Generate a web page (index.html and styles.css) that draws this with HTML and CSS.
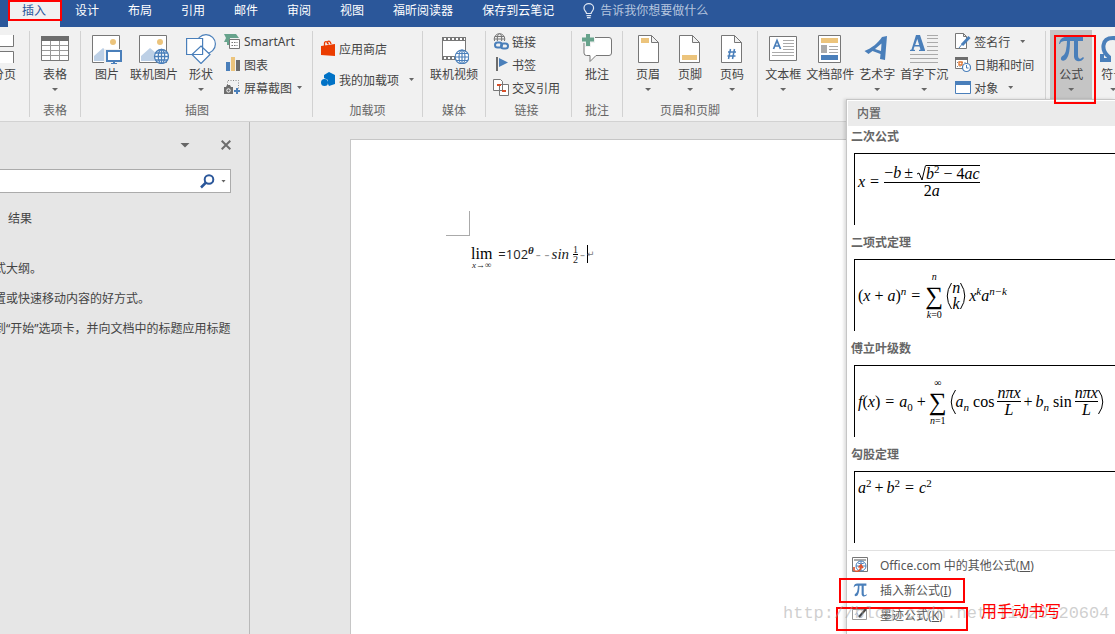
FILE: index.html
```html
<!DOCTYPE html>
<html lang="zh-CN">
<head>
<meta charset="utf-8">
<title>Word</title>
<link rel="stylesheet" href="styles.css">
</head>
<body>
<div class="app">
  <nav class="tabs">
    <button class="tab active">插入</button>
    <button class="tab">设计</button>
    <button class="tab">布局</button>
    <button class="tab">引用</button>
    <button class="tab">邮件</button>
    <button class="tab">审阅</button>
    <button class="tab">视图</button>
    <button class="tab">福昕阅读器</button>
    <button class="tab">保存到云笔记</button>
    <button class="tab tell">
      <svg width="12" height="16" viewBox="0 0 12 16" fill="none" stroke="#dfe7f3" stroke-width="1.2"><path d="M3.5 10.5C3.500 8.500 1 8 1 5a4.800 4.300 0 0 1 9.600 0c0 3-2.500 3.500-2.500 5.500zM3.500 12.700h4.600M4 14.700h3.600"/></svg>
      告诉我你想要做什么
    </button>
  </nav>

  <div class="ribbon">
    <section class="group pages">
      <div class="tools">
        <button class="big">
          <svg width="30" height="30" viewBox="0 0 30 30" fill="#fff" stroke="#777"><path d="M5.500 1v11.500h19V1M5.500 29V17.500h19V29"/></svg>
          <span>分页</span>
        </button>
      </div>
    </section>

    <section class="group table">
      <div class="tools">
        <button class="big">
          <svg width="30" height="30" viewBox="0 0 30 30"><path fill="#fff" stroke="#777" d="M1.500 2.500h27v24h-27z"/><path fill="#6d6d6d" d="M1 2h28v5H1z"/><path stroke="#999" fill="none" d="M2 11.500h26M2 16.500h26M2 21.500h26M10.500 7v19M19.500 7v19"/></svg>
          <span>表格</span><i class="caret"></i>
        </button>
      </div>
      <h2>表格</h2>
    </section>

    <section class="group art">
      <div class="tools">
        <button class="big">
          <svg width="30" height="30" viewBox="0 0 30 30"><path fill="#fff" stroke="#777" d="M.5 1.500h27v27H.5z"/><circle cx="21" cy="8" r="3" fill="#ecc47c"/><path fill="#bdd0e6" d="M2 27v-5l9-8 5 4v9z"/><path fill="#fff" stroke="#f1f1f1" stroke-width="4" d="M14 17h15v10H14z"/><path fill="#fff" stroke="#4a7fba" stroke-width="2" d="M15 17h14v10H15z"/><path fill="#4a7fba" d="M21 27h2v2h2v1h-6v-1h2z"/></svg>
          <span>图片</span>
        </button>
        <button class="big">
          <svg width="30" height="30" viewBox="0 0 30 30"><path fill="#fff" stroke="#777" d="M.5 1.500h27v27H.5z"/><circle cx="21" cy="8" r="3" fill="#ecc47c"/><path fill="#bdd0e6" d="M2 27v-5l9-8 6 5v8z"/><g fill="#fff" stroke="#4a7fba" stroke-width="1.300"><circle cx="22.500" cy="22.500" r="7"/><ellipse cx="22.500" cy="22.500" rx="3.200" ry="7"/><path d="M15.500 22.500h14M16.500 19h12M16.500 26h12M22.500 15.500v14"/></g></svg>
          <span>联机图片</span>
        </button>
        <button class="big">
          <svg width="30" height="30" viewBox="0 0 30 30" fill="#fff" stroke="#4a7fba" stroke-width="1.200"><circle cx="20" cy="10" r="9.400"/><path d="M.6 4.500h16v16H.6zM15 12l9 8.500-9 9-9-9z"/></svg>
          <span>形状</span><i class="caret"></i>
        </button>
        <div class="stack">
          <button class="small">
            <svg width="17" height="17" viewBox="0 0 17 17"><path fill="#67a38c" d="M0 1h12l3 4H6v7H3V9H0l2-4z"/><path fill="#fff" stroke="#777" d="M5.500 6.500h10v9h-10z"/><path stroke="#777" stroke-dasharray="1.500 1" d="M7.500 9.500h6M7.500 12.500h6"/></svg>
            <span>SmartArt</span>
          </button>
          <button class="small">
            <svg width="17" height="17" viewBox="0 0 17 17"><path fill="#4a7fba" d="M2 6h4v9H2z"/><path fill="#ecc47c" d="M7 1h4v14H7z"/><path fill="#6d6d6d" d="M12 4h4v11h-4z"/></svg>
            <span>图表</span>
          </button>
          <button class="small">
            <svg width="17" height="17" viewBox="0 0 17 17"><path fill="none" stroke="#888" stroke-dasharray="1 1.500" d="M3.500 6V1.500h11V10"/><path fill="#6d6d6d" d="M0 8h2l1-2h3l1 2h2v7H0z"/><circle cx="4.500" cy="11.500" r="1.700" fill="#6d6d6d" stroke="#fff"/><path stroke="#4a7fba" stroke-width="2" d="M10 12h6M13 9v6"/></svg>
            <span>屏幕截图</span><i class="caret"></i>
          </button>
        </div>
      </div>
      <h2>插图</h2>
    </section>

    <section class="group addins">
      <div class="tools">
        <div class="stack wide">
          <button class="small">
            <svg width="15" height="17" viewBox="0 0 15 17"><path fill="#eb3c00" d="M0 6l14-2v12L0 15z"/><path fill="none" stroke="#eb3c00" stroke-width="1.300" d="M3.500 6V3c0-2 3-2 4 1.500M6.500 4V2c1-1.500 3-1 3.500 2"/></svg>
            <span>应用商店</span>
          </button>
          <button class="small">
            <svg width="15" height="17" viewBox="0 0 15 17"><path fill="#0072c6" d="M8 1l6 3v9l-6 2-1-2V9L3 7V4z"/><circle cx="3.500" cy="11.500" r="3.500" fill="#0072c6"/></svg>
            <span>我的加载项</span><i class="caret far"></i>
          </button>
        </div>
      </div>
      <h2>加载项</h2>
    </section>

    <section class="group media">
      <div class="tools">
        <button class="big">
          <svg width="30" height="30" viewBox="0 0 30 30"><path fill="#fff" stroke="#777" d="M3.500 3.500h23v22h-23z"/><path fill="#777" d="M3 3h24v4H3zM3 22h14v4H3z"/><path stroke="#fff" stroke-width="2" stroke-dasharray="2 2" d="M5 5h21M5 24h10"/><g fill="#fff" stroke="#4a7fba" stroke-width="1.200"><circle cx="23" cy="23" r="6.800"/><ellipse cx="23" cy="23" rx="3" ry="6.800"/><path d="M16 23h14M17 19.500h12M17 26.500h12M23 16v14"/></g></svg>
          <span>联机视频</span>
        </button>
      </div>
      <h2>媒体</h2>
    </section>

    <section class="group links">
      <div class="tools">
        <div class="stack">
          <button class="small">
            <svg width="16" height="17" viewBox="0 0 16 17" fill="none"><g stroke="#777"><circle cx="6.500" cy="6" r="5.300"/><ellipse cx="6.500" cy="6" rx="2.200" ry="5.300"/><path d="M1 6h11M2 3.500h9"/></g><path fill="#f1f1f1" d="M1 8h15v8H1z"/><g stroke="#4a7fba" stroke-width="2"><rect x="2" y="9.500" width="7" height="5" rx="2.500"/><rect x="8" y="10.500" width="7" height="5" rx="2.500"/></g></svg>
            <span>链接</span>
          </button>
          <button class="small">
            <svg width="16" height="17" viewBox="0 0 16 17"><path fill="#6d6d6d" d="M3 1h2v14H3z"/><path fill="#4a7fba" d="M6 2l9 4.500L6 11z"/></svg>
            <span>书签</span>
          </button>
          <button class="small">
            <svg width="16" height="17" viewBox="0 0 16 17" fill="#fff" stroke="#777"><path d="M6.500 5.500h9v11h-9zM.5.5h7l2 2v9h-9z"/><path stroke="#d8502a" stroke-width="2" d="M4 6h4M9 12h4"/></svg>
            <span>交叉引用</span>
          </button>
        </div>
      </div>
      <h2>链接</h2>
    </section>

    <section class="group comments">
      <div class="tools">
        <button class="big">
          <svg width="30" height="30" viewBox="0 0 30 30"><path fill="#fff" stroke="#777" d="M5 3.500h22q2.500 0 2.500 2.500v13q0 2.500-2.500 2.500H14l-6 6v-6H4.500q-2.500 0-2.500-2.500V6z"/><path stroke="#f1f1f1" stroke-width="6" d="M0 6h13M6 0v13"/><path stroke="#67a38c" stroke-width="4" d="M0 5.500h12M6-1v13"/></svg>
          <span>批注</span>
        </button>
      </div>
      <h2>批注</h2>
    </section>

    <section class="group headers">
      <div class="tools">
        <button class="big">
          <svg width="24" height="30" viewBox="0 0 24 30"><path fill="#fff" stroke="#777" d="M2.500 1.500h13l7 7v20h-20zM15.500 1.500v7h7"/><path fill="#ecc47c" d="M5 4h8v5H5z"/></svg>
          <span>页眉</span><i class="caret"></i>
        </button>
        <button class="big">
          <svg width="24" height="30" viewBox="0 0 24 30"><path fill="#fff" stroke="#777" d="M1.500 1.500h13l7 7v20h-20zM14.500 1.500v7h7"/><path fill="#ecc47c" d="M4 21h15v5H4z"/></svg>
          <span>页脚</span><i class="caret"></i>
        </button>
        <button class="big">
          <svg width="24" height="30" viewBox="0 0 24 30"><path fill="#fff" stroke="#777" d="M1.500 1.500h13l7 7v20h-20zM14.500 1.500v7h7"/><path fill="none" stroke="#4a7fba" stroke-width="1.500" d="M10.500 15l-2 10M14.500 15l-2 10M8 18h8M7.500 22h8"/></svg>
          <span>页码</span><i class="caret"></i>
        </button>
      </div>
      <h2>页眉和页脚</h2>
    </section>

    <section class="group text">
      <div class="tools">
        <button class="big">
          <svg width="30" height="30" viewBox="0 0 30 30"><path fill="#fff" stroke="#777" d="M1.500 2.500h27v24h-27z"/><path fill="none" stroke="#4a7fba" stroke-width="1.700" d="M5.500 15L9 6.500l3.500 8.500M6.500 12h5"/><path stroke="#aaa" d="M15 6.500h11M15 9.500h11M15 12.500h11M15 15.500h11M4 18.500h22M4 21.500h22"/></svg>
          <span>文本框</span><i class="caret"></i>
        </button>
        <button class="big">
          <svg width="30" height="30" viewBox="0 0 30 30"><path fill="#fff" stroke="#777" d="M3.500 1.500h22v27h-22z"/><path fill="#ecc47c" d="M6 4h17v5H6z"/><path fill="#aaa" d="M6 11h6v8H6z"/><path stroke="#aaa" d="M14 12.500h9M14 15.500h9M14 18.500h9"/><path fill="#4a7fba" d="M6 21h17v5H6z"/></svg>
          <span>文档部件</span><i class="caret"></i>
        </button>
        <button class="big">
          <svg width="30" height="30" viewBox="0 0 30 30" fill="#4a7fba"><path fill-rule="evenodd" d="M20 3l5-1-2 24-5-1 .5-5-8-3-4 3-4-3C10 14 16 9 20 3zm-.5 6.500L13 15l6 2z"/></svg>
          <span>艺术字</span><i class="caret"></i>
        </button>
        <button class="big">
          <svg width="30" height="30" viewBox="0 0 30 30"><path fill="#4a7fba" fill-rule="evenodd" d="M7 1h4l5 15v1h-6v-1l1.500-.5-1-3H5.500l-1 3L6 16v1H1v-1l1.500-.5zM8.300 5L6.200 11h4z"/><path stroke="#aaa" d="M18 1.500h11M18 4.500h11M18 8.500h11M18 12.500h11M18 16.500h11M1 20.500h28M1 24.500h28M1 28.500h28"/></svg>
          <span>首字下沉</span><i class="caret"></i>
        </button>
        <div class="stack">
          <button class="small">
            <svg width="16" height="17" viewBox="0 0 16 17"><path fill="#fff" stroke="#777" d="M.5.5h8l3 3v12H.5zM8.500.5v3h3"/><path stroke="#4a7fba" stroke-width="3" d="M14.500 4L7 12"/><path stroke="#4a7fba" d="M4 15l4-5"/></svg>
            <span>签名行</span><i class="caret far"></i>
          </button>
          <button class="small">
            <svg width="16" height="17" viewBox="0 0 16 17"><path fill="#fff" stroke="#777" d="M.5 1.500h12v11H.5z"/><path fill="#6d6d6d" d="M0 1h13v3H0z"/><path stroke="#888" stroke-dasharray="1 1.500" d="M2 6.500h9M2 10.500h9"/><path fill="#fff" stroke="#e0742f" stroke-width="1.300" d="M4 6h3v3H4z"/><circle cx="11.500" cy="11.500" r="4" fill="#fff" stroke="#4a7fba" stroke-width="1.200"/><path fill="none" stroke="#4a7fba" d="M11.500 9v3h2"/></svg>
            <span>日期和时间</span>
          </button>
          <button class="small">
            <svg width="16" height="17" viewBox="0 0 16 17"><path fill="#fff" stroke="#4a7fba" d="M.5 2.500h15v12H.5z"/><path fill="#4a7fba" d="M0 2h16v4H0z"/></svg>
            <span>对象</span><i class="caret far"></i>
          </button>
        </div>
      </div>
    </section>

    <section class="group symbols">
      <div class="tools">
        <button class="big pressed" aria-expanded="true">
          <svg width="30" height="30" viewBox="0 0 30 30" fill="#4a7fba"><path d="M3 10C4 5 6 3 10 3h17v4h-5v14c0 4 2 5 5 2l1 1c-2 4-9 5-10-1V7h-4c0 8-1 14-3 17-2 4-7 3-6 0 1-3 4-2 5-8 .5-3 1-6 1-9-4 0-6 0-7 3z"/></svg>
          <span>公式</span><i class="caret"></i>
        </button>
        <button class="big">
          <svg width="30" height="30" viewBox="0 0 30 30" fill="none" stroke="#4a7fba" stroke-width="4"><path d="M4 20v6h7v-3C3 17 3 4 15 4s12 13 4 19v3h7v-6"/></svg>
          <span>符号</span><i class="caret"></i>
        </button>
      </div>
    </section>
  </div>

  <main class="work">
    <aside class="pane">
      <div class="panebar">
        <button aria-label="选项"><i class="caret large"></i></button>
        <button aria-label="关闭"><svg width="10" height="10" viewBox="0 0 10 10" stroke="#6d6d6d" stroke-width="2"><path d="M.7.7l8.600 8.600M9.300.7L.7 9.300"/></svg></button>
      </div>
      <div class="search">
        <input type="text" aria-label="搜索文档">
        <button aria-label="搜索"><svg width="15" height="15" viewBox="0 0 15 15" fill="none" stroke="#2b579a" stroke-width="2"><circle cx="9" cy="5.500" r="4.300"/><path stroke-width="2.500" d="M6 8.500L1 13.500"/></svg><i class="caret"></i></button>
      </div>
      <button class="panetab">结果</button>
      <p>式大纲。</p>
      <p>置或快速移动内容的好方式。</p>
      <p>到“开始”选项卡，并向文档中的标题应用标题</p>
    </aside>
    <article class="page">
      <div class="corner"></div>
      <div class="formula">
        <span class="lim"><b>lim</b><small>x→∞</small></span>
        <span class="plain">=102<sup>θ</sup></span>
        <span class="dots">- -</span>
        <em>sin</em>
        <span class="frac tiny"><span>1</span><span>2</span></span>
        <span class="dots">-</span>
        <span class="cursor"></span>
        <span class="return">↵</span>
      </div>
    </article>
  </main>

  <div class="menu">
    <h3 class="menuhead">内置</h3>
    <h4>二次公式</h4>
    <button class="eq raised">
      <var>x</var><span class="op">=</span>
      <span class="frac"><span class="row"><span>−<var>b</var></span><span>±</span><span class="root"><svg width="10" height="17" viewBox="0 0 10 17" fill="none" stroke="#000"><path d="M1 9l2-1 3 7L9.500.5"/></svg><span class="radicand"><var>b</var><sup>2</sup> − 4<var>ac</var></span></span></span><span>2<var>a</var></span></span>
    </button>
    <h4>二项式定理</h4>
    <button class="eq">
      <span>(<var>x</var> + <var>a</var>)<sup><var>n</var></sup></span><span class="op">=</span>
      <span class="sum"><var>n</var><b>∑</b><span><var>k</var>=0</span></span>
      <span class="fence"><svg width="6" height="28" viewBox="0 0 6 28" fill="none" stroke="#000"><path d="M5.500 1Q-3 14 5.500 27"/></svg><span class="pair"><var>n</var><var>k</var></span><svg width="6" height="28" viewBox="0 0 6 28" fill="none" stroke="#000"><path d="M.5 1Q9 14 .5 27"/></svg></span>
      <span><var>x</var><sup><var>k</var></sup><var>a</var><sup><var>n−k</var></sup></span>
    </button>
    <h4>傅立叶级数</h4>
    <button class="eq">
      <span><var>f</var>(<var>x</var>)</span><span class="op">=</span><span><var>a</var><sub>0</sub> +</span>
      <span class="sum"><span>∞</span><b>∑</b><span><var>n</var>=1</span></span>
      <span class="fence">
        <svg width="6" height="26" viewBox="0 0 6 26" fill="none" stroke="#000"><path d="M5.500 1Q-3 13 5.500 25"/></svg>
        <span class="row"><span><var>a</var><sub><var>n</var></sub> cos</span>
        <span class="frac"><var>nπx</var><var>L</var></span>
        <span>+</span>
        <span><var>b</var><sub><var>n</var></sub> sin</span>
        <span class="frac"><var>nπx</var><var>L</var></span></span>
        <svg width="6" height="26" viewBox="0 0 6 26" fill="none" stroke="#000"><path d="M.5 1Q9 13 .5 25"/></svg>
      </span>
    </button>
    <h4>勾股定理</h4>
    <button class="eq top">
      <span><var>a</var><sup>2</sup></span><span>+</span><span><var>b</var><sup>2</sup></span><span class="op">=</span><span><var>c</var><sup>2</sup></span>
    </button>
    <div class="commands">
      <button>
        <svg width="16" height="16" viewBox="0 0 16 16" fill="none"><path fill="#fff" stroke="#777" d="M.5.5h15v14H.5z"/><path fill="#aaa" d="M2 2h12v2H2z"/><circle cx="9" cy="9" r="5" fill="#fff" stroke="#4a7fba"/><path stroke="#4a7fba" d="M4 9h10M9 4v10M6 6q3 2 6 0"/><path stroke="#e0552f" stroke-width="1.700" d="M3 14c4 1 6-1 6-5M6.500 10.500L9 8l2 3M2 10v4"/></svg>
        <span>Office.com 中的其他公式(<u>M</u>)</span>
      </button>
      <button>
        <svg width="16" height="16" viewBox="0 0 30 30" fill="#4a7fba"><path d="M3 10C4 5 6 3 10 3h17v4h-5v14c0 4 2 5 5 2l1 1c-2 4-9 5-10-1V7h-4c0 8-1 14-3 17-2 4-7 3-6 0 1-3 4-2 5-8 .5-3 1-6 1-9-4 0-6 0-7 3z"/></svg>
        <span>插入新公式(<u>I</u>)</span>
      </button>
      <button>
        <svg width="16" height="16" viewBox="0 0 16 16" fill="none"><path fill="#fff" stroke="#999" d="M.5 2.500h14v10H.5z"/><path stroke="#a9c0dc" d="M3 8q2-4 3 0t4 2"/><path stroke="#444" stroke-width="2" d="M14 2L7 10"/></svg>
        <span>墨迹公式(<u>K</u>)</span>
      </button>
    </div>
  </div>

  <div class="mark tabmark"></div>
  <div class="mark buttonmark"></div>
  <div class="mark insertmark"></div>
  <div class="mark inkmark"></div>
  <div class="watermark">http://blog.csdn.net/liu20120604</div>
  <div class="note">用手动书写</div>
</div>
</body>
</html>
```

FILE: styles.css
```css
* { box-sizing: border-box; }

body {
  margin: 0;
  font-family: "Noto Sans", "Noto Sans CJK SC", sans-serif;
  font-size: 12px;
  color: #444;
}

button {
  border: 0;
  padding: 0;
  background: none;
  font: inherit;
  color: inherit;
}

h2, h3, h4, p { margin: 0; font-size: 12px; font-weight: 400; }
svg { display: block; flex: none; }

.app {
  position: relative;
  display: flex;
  flex-direction: column;
  height: 100vh;
  overflow: hidden;
  background: #e6e6e6;
}

/* Tabs */
.tabs {
  display: flex;
  flex: none;
  gap: 1px;
  height: 27px;
  padding-left: 8px;
  background: #2b579a;
}
.tab {
  padding: 0 14px 5px;
  line-height: 20px;
  color: #fff;
  white-space: nowrap;
}
.tab.active { background: #f1f1f1; color: #2b579a; }
.tell { display: flex; align-items: center; gap: 5px; color: #b5c5de; }

/* Ribbon */
.ribbon {
  display: flex;
  flex: none;
  padding: 4px 0;
  background: #f1f1f1;
  border-bottom: 1px solid #d2d2d2;
}
.group {
  display: flex;
  flex: none;
  flex-direction: column;
  justify-content: space-between;
  height: 86px;
  border-right: 1px solid #d2d2d2;
}
.group h2 {
  line-height: 12px;
  text-align: center;
  color: #666;
}
.tools { display: flex; align-items: flex-start; }
.pages { width: 30px; overflow: hidden; }
.pages .big { margin-left: -11px; }
.table { padding: 0 10px; }
.art { padding: 0 10px 0 11px; }
.art .tools { gap: 8px; }
.addins { padding: 0 8px; }
.media { padding: 0 7px; }
.links { padding: 0 11px 0 7px; }
.comments { padding: 0 10px; }
.headers { padding: 0 13px; }
.headers .tools { gap: 18px; }
.text { padding: 0 11px 0 7px; }
.text .tools { gap: 5px; }
.text .stack { margin-left: 2px; }
.symbols { padding-left: 4px; border-right: 0; }
.symbols .tools { gap: 6px; }

.big {
  display: flex;
  flex: none;
  flex-direction: column;
  align-items: center;
  padding-top: 3px;
}
.big span { margin-top: 2px; line-height: 18px; white-space: nowrap; }
.big .caret { margin-top: 4px; }
.pressed { width: 42px; height: 69px; margin-top: -1px; padding-top: 4px; background: #c5c5c5; }

.stack { display: flex; flex-direction: column; margin-top: -1px; }
.small {
  display: flex;
  align-items: center;
  gap: 3px;
  height: 23px;
  white-space: nowrap;
}
.small .caret { margin-left: 2px; }
.small .caret.far { margin-left: 7px; }
.wide { padding-top: 3px; }
.wide .small { height: 31px; }

.caret {
  flex: none;
  width: 6px;
  height: 3px;
  background: #666;
  clip-path: polygon(0 0, 100% 0, 50% 100%);
}
.small .caret, .search .caret { width: 5px; }
.caret.large { display: block; width: 10px; height: 5px; }

/* Work area */
.work { display: flex; flex: 1; min-height: 0; }
.pane {
  flex: none;
  width: 250px;
  padding: 17px 18px 0 0;
  border-right: 1px solid #b9b9b9;
  overflow: hidden;
}
.panebar {
  display: flex;
  align-items: center;
  justify-content: flex-end;
  gap: 31px;
  height: 12px;
}
.search {
  display: flex;
  align-items: center;
  height: 24px;
  margin: 18px 0 0;
  background: #fff;
  border: 1px solid #ababab;
  border-left: 0;
}
.search input { flex: 1; min-width: 0; border: 0; background: none; }
.search button { display: flex; align-items: center; gap: 6px; padding-right: 4px; }
.panetab { display: block; margin: 16px 0 30px 8px; line-height: 20px; }
.pane p { margin: 0 0 10px -6px; line-height: 20px; white-space: nowrap; }

.page {
  flex: 1;
  margin: 17px 0 0 100px;
  padding: 71px 95px 0;
  background: #fff;
  border: 1px solid #c6c6c6;
  border-bottom: 0;
}
.corner {
  width: 24px;
  height: 25px;
  border: solid #aaa;
  border-width: 0 1px 1px 0;
}
.formula {
  display: flex;
  align-items: center;
  gap: 2px;
  height: 36px;
  padding-left: 25px;
  font-family: "Liberation Serif", serif;
  font-size: 15px;
  line-height: 16px;
  color: #222;
}
.lim { display: flex; flex-direction: column; align-items: center; padding-top: 8px; margin-right: 4px; }
.lim b { font-weight: 400; font-size: 16px; line-height: 14px; color: #000; }
.lim small { font-size: 9px; line-height: 8px; font-style: italic; }
.plain { font-family: "Open Sans", sans-serif; font-size: 13px; }
.plain sup { font-family: "Liberation Serif", serif; font-style: italic; font-weight: 700; }
.dots { color: #999; }
.tiny { margin-left: 2px; }
.cursor { width: 1px; height: 18px; background: #000; }
.return { font-family: "DejaVu Sans", sans-serif; font-size: 9px; margin-left: -3px; color: #777; }

/* Mathematical notation */
sup, sub { font-size: 11px; line-height: 0; }
.frac { display: inline-flex; flex-direction: column; align-items: stretch; text-align: center; line-height: 16px; }
.frac > :last-child { border-top: 1px solid #000; }
.tiny { font-size: 10px; line-height: 9px; }
.row { display: flex; align-items: center; gap: 3px; }
.root { display: flex; }
.radicand { border-top: 1px solid #000; }
.sum { display: flex; flex-direction: column; align-items: center; font-size: 10px; line-height: 10px; }
.sum b { font-size: 25px; font-weight: 400; line-height: 28px; }
.fence { display: flex; align-items: center; }
.pair { display: flex; flex-direction: column; line-height: 16px; }

/* Equation gallery */
.menu {
  position: absolute;
  top: 99px;
  right: 0;
  bottom: 0;
  left: 846px;
  padding: 1px 0 0 1px;
  overflow: hidden;
  background: #fff;
  border: solid #c6c6c6;
  border-width: 1px 0 0 1px;
  box-shadow: -2px 0 3px #0002;
}
.menuhead { padding-left: 9px; background: #ebebeb; line-height: 25px; color: #666; font-weight: 500; }
.menu h4 { padding-left: 3px; line-height: 22px; font-weight: 700; color: #666; }
.eq {
  display: flex;
  align-items: center;
  gap: 3px;
  width: 100%;
  height: 72px;
  margin: 5px 0 7px 6px;
  padding: 0 0 0 3px;
  border: solid #000;
  border-width: 1px 0 0 1px;
  font-family: "Liberation Serif", serif;
  font-size: 16px;
  color: #000;
  white-space: nowrap;
}
.eq.raised { padding-bottom: 16px; }
.eq.top { padding-bottom: 40px; }
.op { padding: 0 2px; }

.commands {
  display: flex;
  flex-direction: column;
  padding: 1px 0 0 4px;
  border-top: 1px solid #e1e1e1;
}
.commands button {
  display: flex;
  align-items: center;
  gap: 12px;
  height: 25px;
  color: #555;
}

/* Callouts */
.mark { position: absolute; border: 2px solid #f00; pointer-events: none; }
.tabmark { left: 8px; top: 0; width: 54px; height: 21px; }
.buttonmark { left: 1054px; top: 35px; width: 42px; height: 69px; }
.insertmark { left: 839px; top: 578px; width: 126px; height: 25px; }
.inkmark { left: 836px; top: 607px; width: 132px; height: 24px; }
.note { position: absolute; left: 981px; top: 600px; font-size: 16px; line-height: 22px; color: #f00; }
.watermark {
  position: absolute;
  left: 783px;
  top: 604px;
  font-family: "Liberation Mono", monospace;
  font-size: 17px;
  line-height: 20px;
  color: #a0a0a080;
}
```
